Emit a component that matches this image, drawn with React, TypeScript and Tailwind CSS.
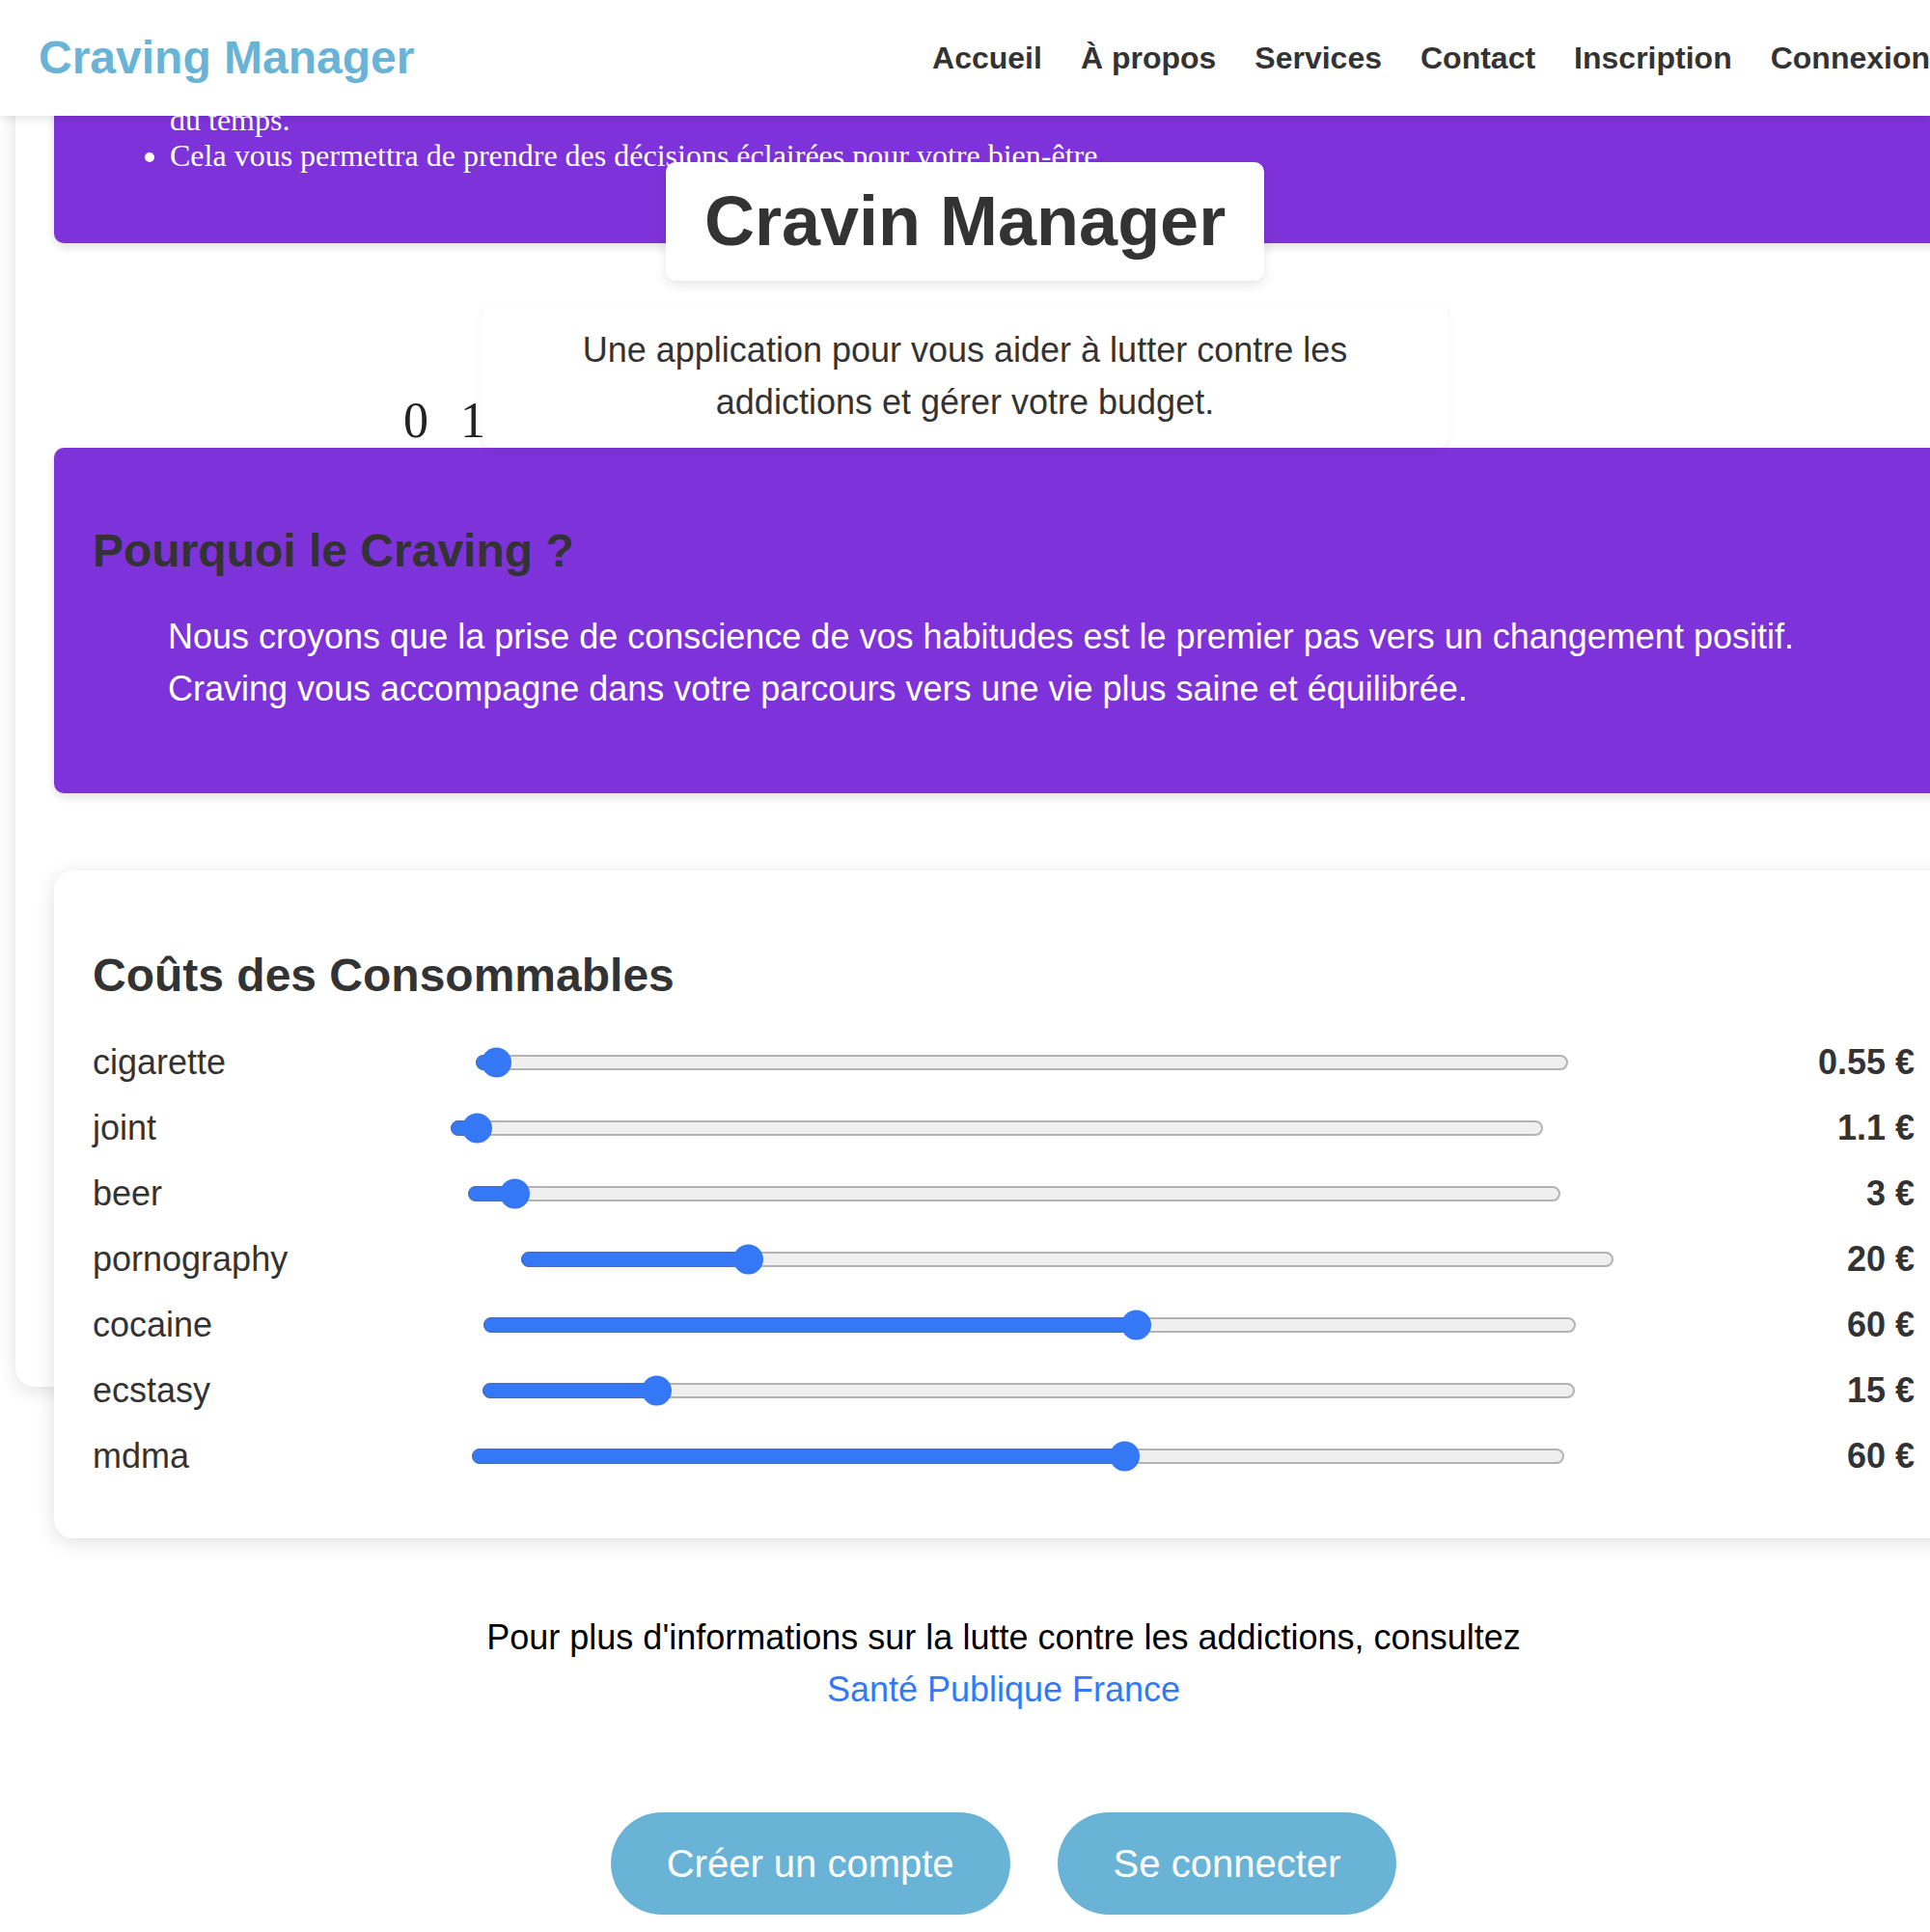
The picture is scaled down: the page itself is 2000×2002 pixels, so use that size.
const navLinks = ["Accueil", "À propos", "Services", "Contact", "Inscription", "Connexion"];

const costs = [
  { name: "cigarette", value: 0.55 },
  { name: "joint", value: 1.1 },
  { name: "beer", value: 3 },
  { name: "pornography", value: 20 },
  { name: "cocaine", value: 60 },
  { name: "ecstasy", value: 15 },
  { name: "mdma", value: 60 },
];

function CostSlider({ value }: { value: number }) {
  const trackWidth = 1132;
  const thumb = 31;
  const left = (value / 100) * (trackWidth - thumb);

  return (
    <div className="relative flex h-[32px] w-[1132px] shrink-0 items-center">
      <div className="h-[16px] w-full rounded-full border-2 border-[#b3b3b3] bg-[#efefef]" />
      <div
        className="absolute left-0 top-1/2 h-[16px] -translate-y-1/2 rounded-full border border-[#4a6cb3] bg-[#3478f6]"
        style={{ width: left + thumb / 2 + 2 }}
      />
      <div
        className="absolute top-1/2 size-[31px] -translate-y-1/2 rounded-full bg-[#3478f6]"
        style={{ left }}
      />
    </div>
  );
}

export default function App() {
  return (
    <div className="relative h-[2002px] w-[2000px] overflow-hidden bg-white font-['Liberation_Sans',Arial,sans-serif]">
      <header className="absolute left-0 top-0 z-30 flex h-[120px] w-[2000px] items-center bg-white pl-10 shadow-[0_2px_10px_rgba(0,0,0,0.12)]">
        <span className="text-[48px] font-bold text-[#69b4d6]">Craving Manager</span>
        <nav className="ml-auto flex gap-10 whitespace-nowrap text-[32px] font-bold text-[#333]">
          {navLinks.map((link) => (
            <a key={link} href="#">
              {link}
            </a>
          ))}
        </nav>
      </header>

      <div className="-mt-[71px] ml-4 h-[1508px] w-[2048px] rounded-[20px] bg-white px-10 pt-10 shadow-[0_4px_20px_rgba(0,0,0,0.12)]">
        <section className="rounded-[10px] bg-[#7e32d9] px-10 pb-10 pt-[100px] shadow-[0_4px_10px_rgba(0,0,0,0.12)]">
          <ul className="mb-8 list-disc pl-[80px] font-['Liberation_Serif','Times_New_Roman',serif] text-[32px] leading-[37px] text-white">
            <li>
              Suivez l'évolution de vos envies et de vos dépenses au fil
              <br />
              du temps.
            </li>
            <li>Cela vous permettra de prendre des décisions éclairées pour votre bien-être.</li>
          </ul>
        </section>

        <div className="relative z-10 -mt-[84px] ml-[634px] w-fit rounded-[10px] bg-white px-10 py-5 shadow-[0_4px_12px_rgba(0,0,0,0.1)]">
          <h1 className="text-[72px] font-bold leading-[83px] text-[#333]">Cravin Manager</h1>
        </div>

        <div className="relative mt-[25px]">
          <div className="absolute left-[362px] top-[94px] flex gap-[33px] font-['Liberation_Serif','Times_New_Roman',serif] text-[52px] leading-[52px] text-[#222]">
            <span>0</span>
            <span>1</span>
          </div>
          <div className="relative z-10 ml-[444px] w-[1000px] rounded-[10px] bg-white px-10 py-5 text-center text-[36px] leading-[54px] text-[#333] shadow-[0_2px_10px_rgba(0,0,0,0.06)]">
            Une application pour vous aider à lutter contre les addictions et gérer votre budget.
          </div>
        </div>

        <section className="relative rounded-[10px] bg-[#7e32d9] px-10 pb-[81px] pt-[79px] shadow-[0_4px_10px_rgba(0,0,0,0.12)]">
          <h2 className="text-[48px] font-bold leading-[55px] text-[#333]">Pourquoi le Craving ?</h2>
          <p className="ml-[78px] mt-[35px] whitespace-nowrap text-[36px] leading-[54px] text-white">
            Nous croyons que la prise de conscience de vos habitudes est le premier pas vers un changement positif.
            <br />
            Craving vous accompagne dans votre parcours vers une vie plus saine et équilibrée.
          </p>
        </section>

        <section className="relative mt-20 rounded-[20px] bg-white px-10 pb-[58px] pt-[81px] shadow-[0_4px_20px_rgba(0,0,0,0.12)]">
          <h2 className="mb-9 text-[48px] font-bold leading-[55px] text-[#333]">Coûts des Consommables</h2>
          <div className="flex flex-col gap-[14px]">
            {costs.map((item) => (
              <div key={item.name} className="flex h-[54px] items-center justify-between text-[36px] text-[#333]">
                <span>{item.name}</span>
                <CostSlider value={item.value} />
                <span className="font-bold">{item.value} €</span>
              </div>
            ))}
          </div>
        </section>

        <p className="mt-[76px] text-center text-[36px] leading-[54px] text-black">
          Pour plus d'informations sur la lutte contre les addictions, consultez
          <br />
          <a href="#" className="text-[#3478f6]">
            Santé Publique France
          </a>
        </p>

        <div className="mt-[100px] flex justify-center gap-[49px]">
          <button className="rounded-full bg-[#69b4d6] px-[58px] py-6 text-[40px] leading-[58px] text-white">
            Créer un compte
          </button>
          <button className="rounded-full bg-[#69b4d6] px-[58px] py-6 text-[40px] leading-[58px] text-white">
            Se connecter
          </button>
        </div>
      </div>
    </div>
  );
}
